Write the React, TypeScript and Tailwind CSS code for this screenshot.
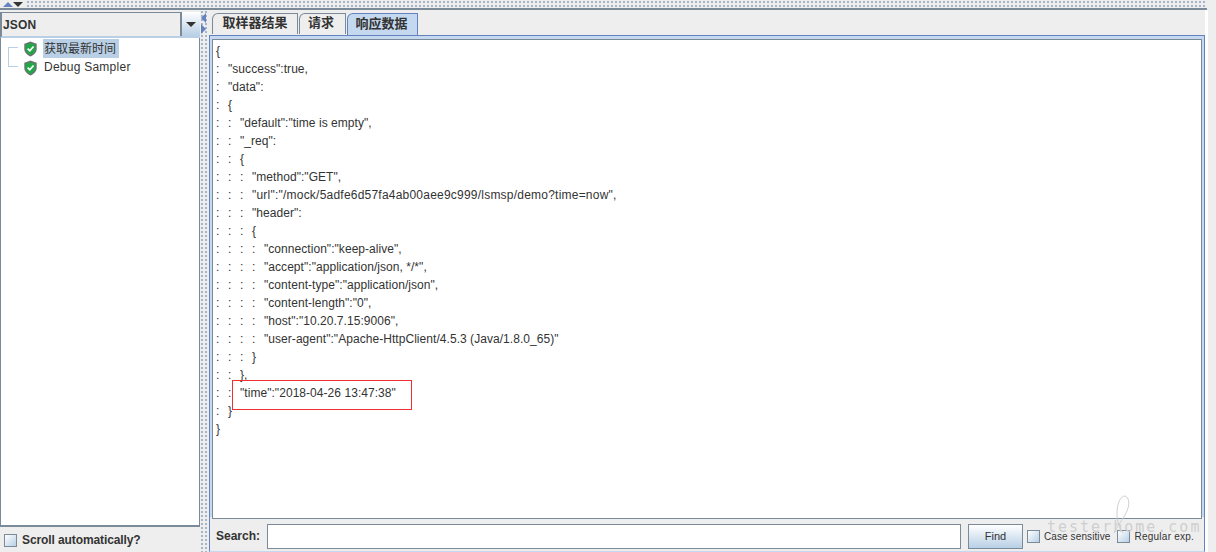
const lines: [number, string][] = [
  [0, '{'],
  [1, '"success":true,'],
  [1, '"data":'],
  [1, '{'],
  [2, '"default":"time is empty",'],
  [2, '"_req":'],
  [2, '{'],
  [3, '"method":"GET",'],
  [3, '"url":"/mock/5adfe6d57fa4ab00aee9c999/lsmsp/demo?time=now",'],
  [3, '"header":'],
  [3, '{'],
  [4, '"connection":"keep-alive",'],
  [4, '"accept":"application/json, */*",'],
  [4, '"content-type":"application/json",'],
  [4, '"content-length":"0",'],
  [4, '"host":"10.20.7.15:9006",'],
  [4, '"user-agent":"Apache-HttpClient/4.5.3 (Java/1.8.0_65)"'],
  [3, '}'],
  [2, '},'],
  [2, '"time":"2018-04-26 13:47:38"'],
  [1, '}'],
  [0, '}'],
]

const Shield = () => (
  <svg width="15" height="16" viewBox="0 0 16 18" className="shrink-0">
    <path d="M8 .5 L15 3 V9 C15 13 11.5 16 8 17.5 C4.5 16 1 13 1 9 V3 Z" fill="#6b7570" />
    <path d="M8 2.5 L13.4 4.3 V9 C13.4 12 10.7 14.4 8 15.7 C5.3 14.4 2.6 12 2.6 9 V4.3 Z" fill="#1fa846" />
    <path d="M4.8 8.6 L7.2 11 L11.4 6.2" fill="none" stroke="#ffffff" strokeWidth="2" />
  </svg>
)

const CheckBox = () => (
  <span className="w-[13px] h-[13px] shrink-0 border border-[#7a8a99] bg-gradient-to-br from-[#ffffff] to-[#b8cfe5]" />
)

const App = () => {
  return (
    <div className="relative w-[1216px] h-[552px] bg-[#eeeeee] overflow-hidden font-['Liberation_Sans','Noto_Sans_CJK_SC',sans-serif] text-[12px] text-[#333333]">
      {/* Top split bar */}
      <div className="flex items-stretch h-[10px] w-[1207px] border-b-2 border-[#7a8a99]">
        <div className="flex items-center gap-[0px] pl-[3px]">
          <span className="w-0 h-0 border-x-[5px] border-x-transparent border-b-[5px] border-b-[#6382bf]" />
          <span className="w-0 h-0 border-x-[5px] border-x-transparent border-t-[5px] border-t-[#333333]" />
        </div>
        <div className="flex-1 ml-[3px] bg-[radial-gradient(#a5b5c9_0.8px,transparent_0.9px)] bg-[length:4px_4px]" />
      </div>

      <div className="flex h-[542px]">
        {/* Left panel */}
        <div className="w-[200px] shrink-0 flex flex-col pt-[2px]">
          <div className="h-[26px] shrink-0 flex border-2 border-t-0 border-[#b8cfe5] border-l-[#7a8a99] border-r-0 bg-[#eeeeee]">
            <div className="flex-1 flex items-center pl-px font-bold text-[12px] tracking-[0.2px] border-t border-[#7a8a99]">JSON</div>
            <div className="w-[20px] flex items-center justify-center border-l-2 border-[#7a8a99] bg-gradient-to-b from-[#ffffff] to-[#b8cfe5]">
              <span className="w-0 h-0 border-x-[5px] border-x-transparent border-t-[5px] border-t-[#333333]" />
            </div>
          </div>
          <div className="relative h-[489px] shrink-0 bg-white border-x border-b-2 border-[#7a8a99] pt-[1px] pl-[22px]">
            <div className="absolute left-[7px] top-[9px] w-[10px] h-[20px] border-l border-y border-[#b8cfe5]" />
            <div className="flex items-center h-[19px] gap-[5px]">
              <Shield />
              <span className="bg-[#b8cfe5] h-[19px] w-[76px] pl-px pt-px leading-[19px] text-[12px]">获取最新时间</span>
            </div>
            <div className="flex items-center h-[19px] gap-[5px]">
              <Shield />
              <span className="pl-px pb-[2px] tracking-[0.25px]">Debug Sampler</span>
            </div>
          </div>
          <div className="flex items-center h-[25px] shrink-0 pt-[1px] pl-[4px] gap-[5px] font-bold tracking-[-0.1px]">
            <CheckBox />
            <span>Scroll automatically?</span>
          </div>
        </div>

        {/* Split divider */}
        <div className="relative w-[9px] shrink-0 bg-[radial-gradient(#a5b5c9_0.8px,transparent_0.9px)] bg-[length:4px_4px]">
          <span className="absolute left-[1px] top-[3px] w-0 h-0 border-y-[5px] border-y-transparent border-r-[5px] border-r-[#6382bf]" />
          <span className="absolute left-[1px] top-[14px] w-0 h-0 border-y-[5px] border-y-transparent border-l-[5px] border-l-[#6382bf]" />
        </div>

        {/* Right panel */}
        <div className="w-[996px] shrink-0 flex flex-col pt-[3px]">
          <div className="flex h-[22px] pl-[3px] gap-px font-bold text-[13px]">
            <div className="w-[86px] h-[21px] pb-[2px] flex items-center justify-center border border-b-0 border-[#7a8a99] rounded-tl-[6px] bg-[#eeeeee]">取样器结果</div>
            <div className="w-[47px] h-[21px] pb-[2px] pr-[3px] flex items-center justify-center border border-b-0 border-[#7a8a99] rounded-tl-[6px] bg-[#eeeeee]">请求</div>
            <div className="w-[71px] h-[22px] pb-[2px] pr-[2px] flex items-center justify-center border border-b-0 border-[#6382bf] rounded-tl-[6px] bg-[#c4d9ef]">响应数据</div>
          </div>
          <div className="h-[482px] shrink-0 border border-[#6382bf] border-b-0 bg-[#c4d9ef] px-[2px] pt-[3px]">
            <div className="h-[480px] bg-white border border-[#7a8a99] pl-[3px] pt-[2px] overflow-hidden">
              {lines.map(([level, text], i) => (
                <div key={i} className="flex h-[18px] leading-[18px] whitespace-pre">
                  {Array.from({ length: level }).map((_, j) => (
                    <span key={j} className="w-[12px] shrink-0">:</span>
                  ))}
                  <span className={text.startsWith('"url"') ? 'tracking-[0.22px]' : 'tracking-[0.05px]'}>{text}</span>
                </div>
              ))}
            </div>
          </div>
          <div className="flex items-center h-[35px] shrink-0 pt-[4px] border-x border-b border-[#6382bf] border-b-[#c4d9ef] pl-[6px] gap-[7px]">
            <span className="font-bold w-[44px]">Search:</span>
            <div className="w-[694px] h-[25px] bg-white border border-[#7a8a99]" />
            <button className="w-[55px] h-[25px] border border-[#7a8a99] bg-gradient-to-b from-[#ffffff] to-[#b8cfe5] text-[11px]">Find</button>
            <div className="flex items-center gap-[4px] ml-[-3px] text-[10px] tracking-[0.1px]">
              <CheckBox />
              <span>Case sensitive</span>
            </div>
            <div className="flex items-center gap-[4px] text-[10px] tracking-[0.25px]">
              <CheckBox />
              <span>Regular exp.</span>
            </div>
          </div>
        </div>
        <div className="w-[3px] bg-white shrink-0" />
      </div>

      {/* Red annotation */}
      <div className="absolute left-[232px] top-[380px] w-[180px] h-[30px] border border-[#f03030]" />

      {/* Watermark */}
      <div className="absolute left-[1047px] top-[516px] text-[#cfcfcf] text-[15px] tracking-[2px] font-['DejaVu_Sans_Mono',monospace] whitespace-nowrap">testerhome.com</div>
      <svg className="absolute left-[1108px] top-[493px]" width="30" height="42" viewBox="0 0 30 42" fill="none" stroke="#cfcfcf">
        <path d="M6 40 C12 28 24 16 20 6 C17 -1 9 5 9 20 C9 28 11 34 15 40" />
      </svg>
    </div>
  )
}

export default App
